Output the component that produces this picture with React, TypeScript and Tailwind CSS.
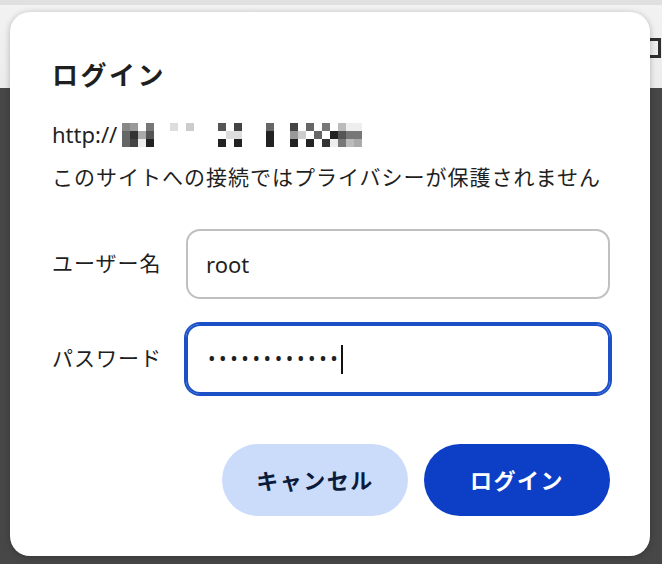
const MOSAIC: string[][] = [
  ['bg-[#888]', 'bg-[#999]', '', 'bg-[#777]', '', '', 'bg-[#ddd]', '', 'bg-[#ccc]', '', '', '', 'bg-[#555]', '', 'bg-[#444]', '', '', '', 'bg-[#666]', '', '', 'bg-[#444]', '', 'bg-[#666]', '', 'bg-[#777]', '', 'bg-[#bbb]', 'bg-[#eee]', 'bg-[#eee]'],
  ['bg-[#666]', 'bg-[#333]', 'bg-[#aaa]', 'bg-[#555]', '', '', '', '', '', '', '', '', '', 'bg-[#ddd]', 'bg-[#ddd]', '', '', '', 'bg-[#222]', '', '', 'bg-[#999]', 'bg-[#ccc]', '', 'bg-[#666]', '', 'bg-[#222]', 'bg-[#555]', 'bg-[#777]', 'bg-[#777]'],
  ['bg-[#666]', 'bg-[#444]', 'bg-[#eee]', 'bg-[#222]', '', '', '', '', '', '', '', '', 'bg-[#222]', '', 'bg-[#222]', '', '', '', 'bg-[#222]', '', '', 'bg-[#222]', '', 'bg-[#222]', '', 'bg-[#333]', 'bg-[#eee]', 'bg-[#777]', 'bg-[#bbb]', 'bg-[#aaa]'],
];

// 伏せ字になった URL のモザイク部分
function Mosaic() {
  return (
    <div className="mt-[2px] flex flex-col">
      {MOSAIC.map((row, r) => (
        <div key={r} className="flex">
          {row.map((c, i) => (
            <span key={i} className={`h-[8px] w-[8px] ${c}`} />
          ))}
        </div>
      ))}
    </div>
  );
}

export default function App() {
  return (
    <div className="relative h-[564px] w-[662px] overflow-hidden font-['Noto_Sans','Noto_Sans_CJK_JP',sans-serif] text-[#1f1f1f]">
      {/* 背景のブラウザ画面 */}
      <div className="flex h-full flex-col">
        <div className="h-[5px] bg-[#e0e0e0]" />
        <div className="relative h-[83px] bg-gradient-to-b from-[#f2f2f2] to-[#ececec]">
          <div className="absolute left-[643px] top-[33px] h-[20px] w-[18px] border-[3px] border-[#2e2e2e]" />
        </div>
        <div className="flex-1 bg-[#474747]" />
      </div>

      {/* ログインダイアログ */}
      <div className="absolute left-[10px] top-[12px] flex h-[544px] w-[640px] flex-col rounded-[20px] bg-white pb-[40px] pl-[42px] pr-[40px] pt-[47px] shadow-[0_1px_6px_rgba(0,0,0,0.25)]">
        <h1 className="text-[26px] font-bold leading-[32px] tracking-[2.5px]">ログイン</h1>

        <div className="mt-[30px] flex h-[26px] items-start">
          <span className="w-[70px] text-[22px] leading-[26px]">http://</span>
          <Mosaic />
        </div>
        <p className="mt-[16px] text-[21px] leading-[28px] tracking-[1px]">
          このサイトへの接続ではプライバシーが保護されません
        </p>

        <div className="mt-[38px] flex flex-col gap-[25px]">
          <div className="flex items-center">
            <span className="w-[134px] text-[21px] tracking-[1px]">ユーザー名</span>
            <div className="flex h-[70px] w-[424px] items-center rounded-[14px] border-2 border-[#c0c0c0] pl-[18px] text-[22px]">
              root
            </div>
          </div>
          <div className="flex items-center">
            <span className="w-[134px] text-[21px] tracking-[1px]">パスワード</span>
            <div className="flex h-[70px] w-[424px] items-center rounded-[14px] border-2 border-[#1b50c6] pl-[20px] text-[20px] ring-2 ring-[#1b50c6]">
              <span className="tracking-[3.6px]">••••••••••••</span>
              <span className="h-[29px] w-[2px] bg-[#111]" />
            </div>
          </div>
        </div>

        <div className="mt-auto flex justify-end gap-[16px]">
          <button
            type="button"
            className="h-[72px] w-[186px] rounded-full bg-[#cbdcfb] text-[22px] font-bold tracking-[1.5px] text-[#0d1b3a]"
          >
            キャンセル
          </button>
          <button
            type="button"
            className="h-[72px] w-[186px] rounded-full bg-[#0c3fc6] text-[22px] font-bold tracking-[1.5px] text-white"
          >
            ログイン
          </button>
        </div>
      </div>
    </div>
  );
}
